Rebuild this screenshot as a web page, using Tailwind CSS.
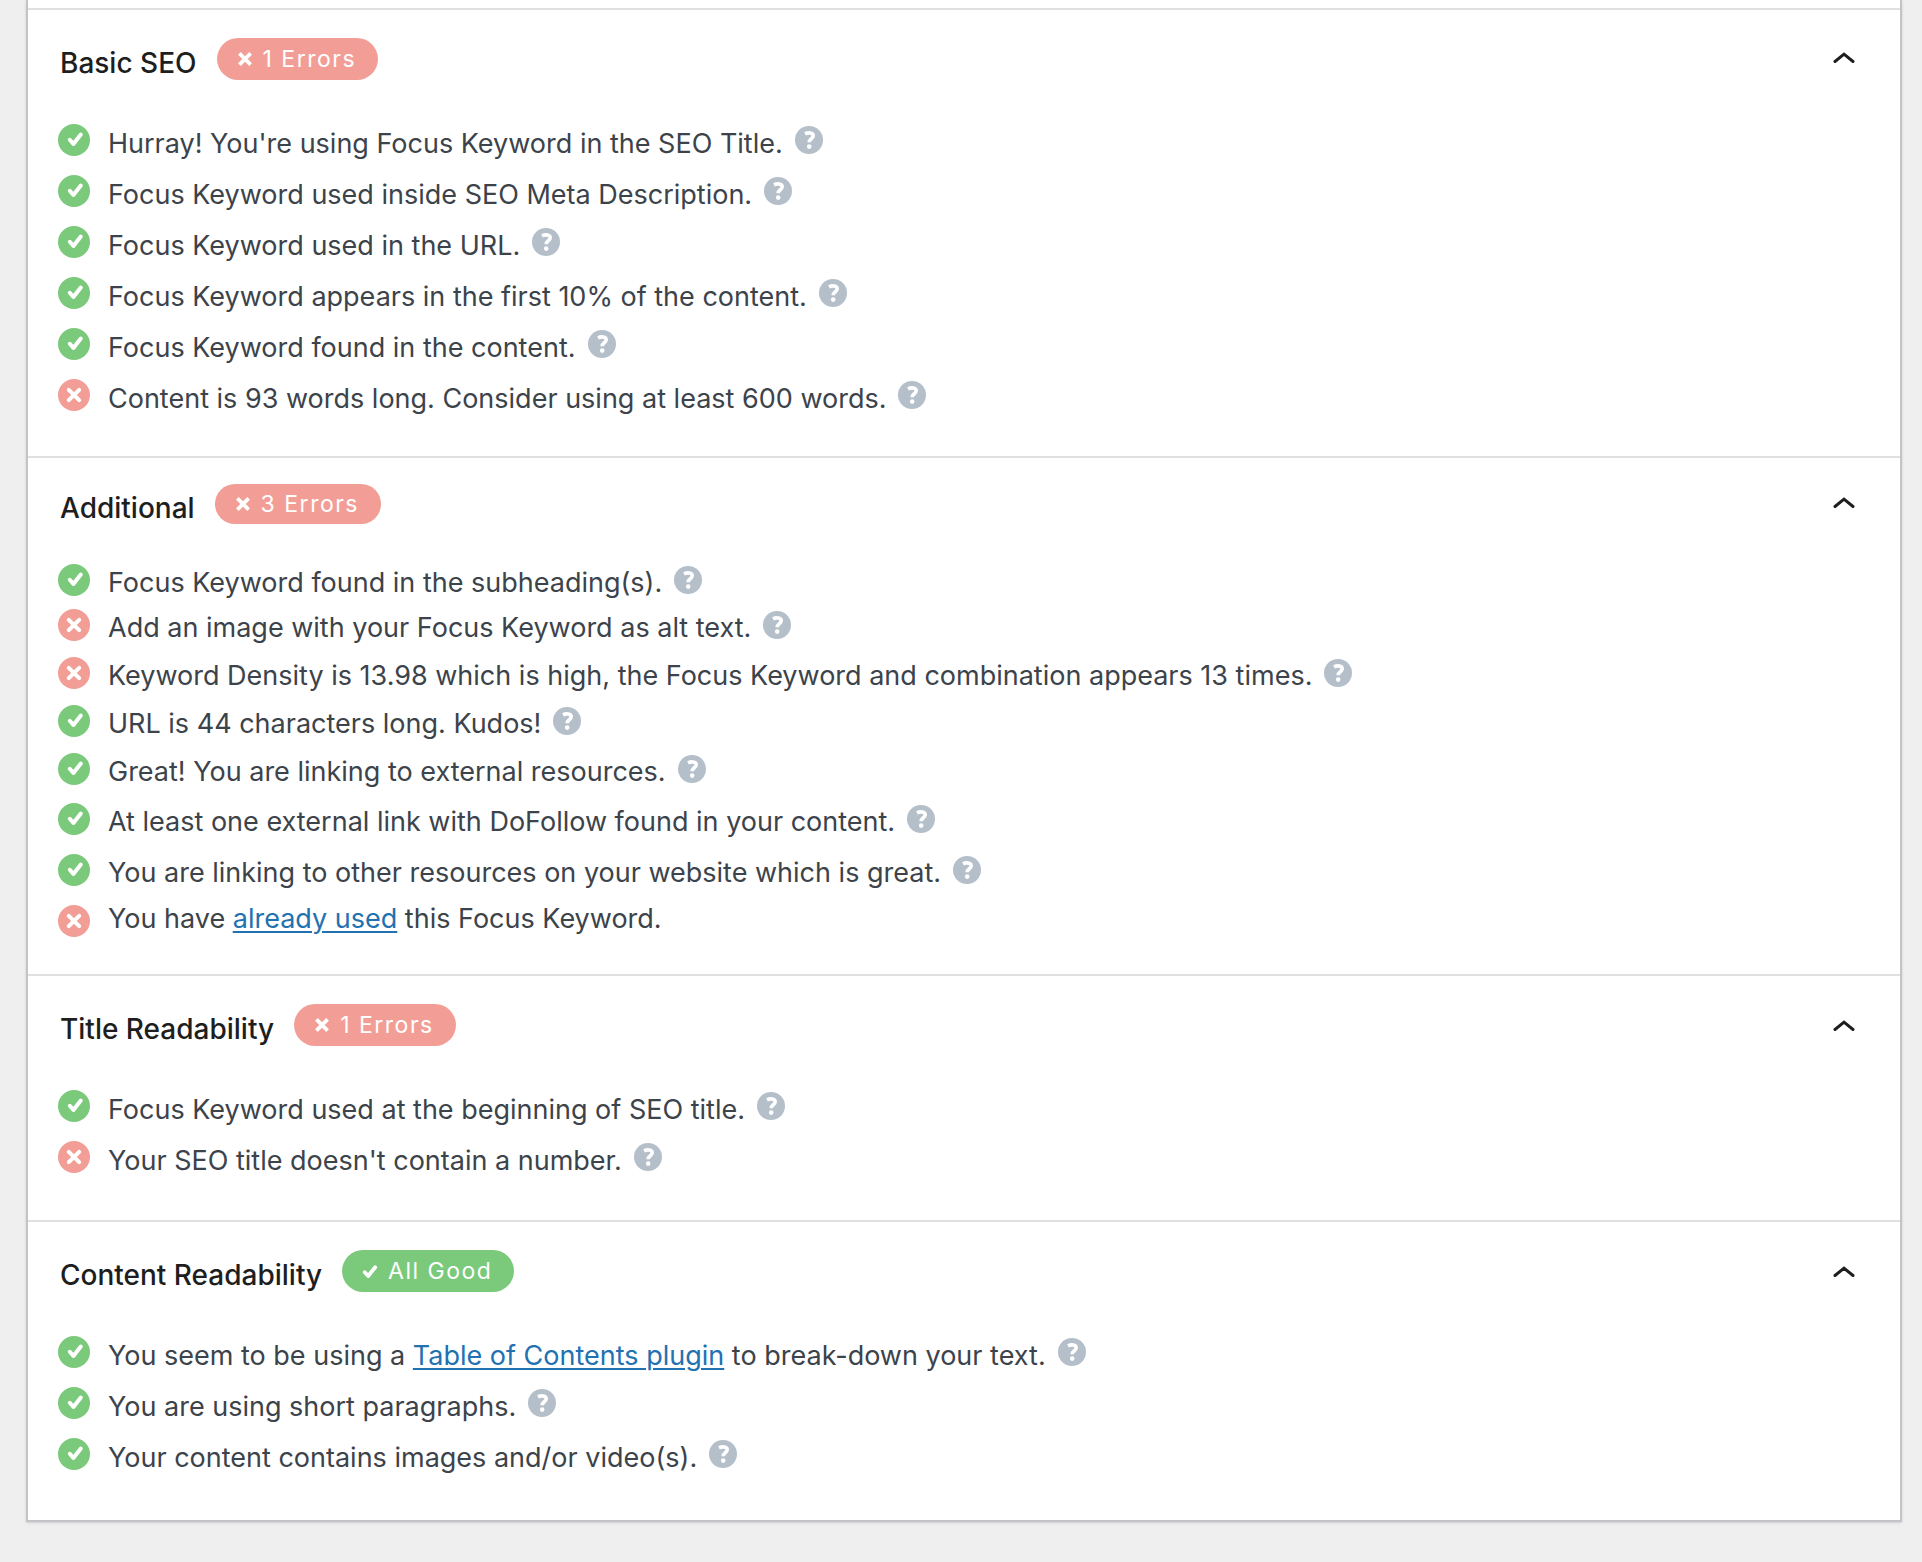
<!DOCTYPE html>
<html lang="en">
<head>
<meta charset="utf-8">
<meta name="viewport" content="width=device-width, initial-scale=1">
<title>SEO Analysis</title>
<script src="https://cdn.jsdelivr.net/npm/@tailwindcss/browser@4"></script>
</head>
<body class="min-h-screen bg-[#efefef] pr-5 pb-10 pl-[26px] font-['Inter',sans-serif] text-[27px] leading-8 text-[#3c434a]">
<svg class="hidden" aria-hidden="true">
  <symbol id="ok" viewBox="0 0 32 32"><circle cx="16" cy="16" r="16" fill="#7bc97a"/><path d="M11.8 15.8l3.6 4.2 7.4-9.4" fill="none" stroke="#fff" stroke-width="4" stroke-linejoin="round" stroke-linecap="round"/></symbol>
  <symbol id="bad" viewBox="0 0 32 32"><circle cx="16" cy="16" r="16" fill="#f29e96"/><path d="M10.8 10.8l10.4 10.4M21.2 10.8L10.8 21.2" fill="none" stroke="#fff" stroke-width="4" stroke-linecap="round"/></symbol>
  <symbol id="help" viewBox="0 0 28 28"><circle cx="14" cy="14" r="14" fill="#b4bfca"/><path d="M10 7.8c3-1.5 8.2-1.3 8.2 2 0 3-4 3-4 6.4" fill="none" stroke="#fff" stroke-width="3.6"/><circle cx="14.2" cy="20.6" r="2.3" fill="#fff"/></symbol>
  <symbol id="cross" viewBox="0 0 16 16"><path d="M2.4 2.4l11.2 11.2M13.6 2.4L2.4 13.6" fill="none" stroke="#fff" stroke-width="3.8"/></symbol>
  <symbol id="tick" viewBox="0 0 16 16"><path d="M2.8 9.2l3.4 3.8 7-8.8" fill="none" stroke="#fff" stroke-width="3.8" stroke-linejoin="round" stroke-linecap="round"/></symbol>
  <symbol id="up" viewBox="0 0 24 12"><path d="M3 10.5l9-7.3 9 7.3" fill="none" stroke="#1e1e1e" stroke-width="3" stroke-linecap="round"/></symbol>
</svg>
<main class="border-2 border-t-0 border-[#c3c4c7] bg-white shadow-sm">
  <div class="h-2"></div>

  <section class="border-t-2 border-[#e0e0e0] pt-7 pr-11 pb-9 pl-[30px]">
    <header class="flex h-[42px] items-center">
      <h2 class="pt-2 pl-0.5 text-[28px] font-medium text-[#1e1e1e]">Basic SEO</h2>
      <span class="ml-5 flex h-full items-center gap-2.5 rounded-full bg-[#f29e96] pr-[22px] pl-5 text-[23px] tracking-[1.5px] text-white"><svg class="size-4"><use href="#cross"/></svg>1 Errors</span>
      <button type="button" aria-label="Collapse Basic SEO" class="ml-auto pb-1"><svg class="h-3 w-6"><use href="#up"/></svg></button>
    </header>
    <ul class="mt-[34px]">
      <li class="flex h-[51px] items-center"><svg class="mr-[18px] size-8"><use href="#ok"/></svg><span class="pt-2">Hurray! You're using Focus Keyword in the SEO Title.</span><a href="#" aria-label="Help" class="ml-3"><svg class="size-7"><use href="#help"/></svg></a></li>
      <li class="flex h-[51px] items-center"><svg class="mr-[18px] size-8"><use href="#ok"/></svg><span class="pt-2">Focus Keyword used inside SEO Meta Description.</span><a href="#" aria-label="Help" class="ml-3"><svg class="size-7"><use href="#help"/></svg></a></li>
      <li class="flex h-[51px] items-center"><svg class="mr-[18px] size-8"><use href="#ok"/></svg><span class="pt-2">Focus Keyword used in the URL.</span><a href="#" aria-label="Help" class="ml-3"><svg class="size-7"><use href="#help"/></svg></a></li>
      <li class="flex h-[51px] items-center"><svg class="mr-[18px] size-8"><use href="#ok"/></svg><span class="pt-2">Focus Keyword appears in the first 10% of the content.</span><a href="#" aria-label="Help" class="ml-3"><svg class="size-7"><use href="#help"/></svg></a></li>
      <li class="flex h-[51px] items-center"><svg class="mr-[18px] size-8"><use href="#ok"/></svg><span class="pt-2">Focus Keyword found in the content.</span><a href="#" aria-label="Help" class="ml-3"><svg class="size-7"><use href="#help"/></svg></a></li>
      <li class="flex h-[51px] items-center"><svg class="mr-[18px] size-8"><use href="#bad"/></svg><span class="pt-2">Content is 93 words long. Consider using at least 600 words.</span><a href="#" aria-label="Help" class="ml-3"><svg class="size-7"><use href="#help"/></svg></a></li>
    </ul>
  </section>

  <section class="border-t-2 border-[#e0e0e0] pt-[26px] pr-11 pb-7 pl-[30px]">
    <header class="flex h-10 items-center">
      <h2 class="pt-2 pl-0.5 text-[28px] font-medium text-[#1e1e1e]">Additional</h2>
      <span class="ml-5 flex h-full items-center gap-2.5 rounded-full bg-[#f29e96] pr-[22px] pl-5 text-[23px] tracking-[1.5px] text-white"><svg class="size-4"><use href="#cross"/></svg>3 Errors</span>
      <button type="button" aria-label="Collapse Additional" class="ml-auto pb-1"><svg class="h-3 w-6"><use href="#up"/></svg></button>
    </header>
    <ul class="mt-[35px]">
      <li class="flex h-[42px] items-center"><svg class="mr-[18px] size-8"><use href="#ok"/></svg><span class="pt-1.5">Focus Keyword found in the subheading(s).</span><a href="#" aria-label="Help" class="ml-3"><svg class="size-7"><use href="#help"/></svg></a></li>
      <li class="flex h-12 items-center"><svg class="mr-[18px] size-8"><use href="#bad"/></svg><span class="pt-1.5">Add an image with your Focus Keyword as alt text.</span><a href="#" aria-label="Help" class="ml-3"><svg class="size-7"><use href="#help"/></svg></a></li>
      <li class="flex h-12 items-center"><svg class="mr-[18px] size-8"><use href="#bad"/></svg><span class="pt-1.5">Keyword Density is 13.98 which is high, the Focus Keyword and combination appears 13 times.</span><a href="#" aria-label="Help" class="ml-3"><svg class="size-7"><use href="#help"/></svg></a></li>
      <li class="flex h-12 items-center"><svg class="mr-[18px] size-8"><use href="#ok"/></svg><span class="pt-1.5">URL is 44 characters long. Kudos!</span><a href="#" aria-label="Help" class="ml-3"><svg class="size-7"><use href="#help"/></svg></a></li>
      <li class="flex h-12 items-center"><svg class="mr-[18px] size-8"><use href="#ok"/></svg><span class="pt-1.5">Great! You are linking to external resources.</span><a href="#" aria-label="Help" class="ml-3"><svg class="size-7"><use href="#help"/></svg></a></li>
      <li class="flex h-[51px] items-center"><svg class="mr-[18px] size-8"><use href="#ok"/></svg><span class="pt-1.5">At least one external link with DoFollow found in your content.</span><a href="#" aria-label="Help" class="ml-3"><svg class="size-7"><use href="#help"/></svg></a></li>
      <li class="flex h-[51px] items-center"><svg class="mr-[18px] size-8"><use href="#ok"/></svg><span class="pt-1.5">You are linking to other resources on your website which is great.</span><a href="#" aria-label="Help" class="ml-3"><svg class="size-7"><use href="#help"/></svg></a></li>
      <li class="flex h-[51px] items-center"><svg class="mr-[18px] size-8"><use href="#bad"/></svg><span class="pb-1">You have <a href="#" class="text-[#2271b1] underline decoration-2 underline-offset-3">already used</a> this Focus Keyword.</span></li>
    </ul>
  </section>

  <section class="border-t-2 border-[#e0e0e0] pt-7 pr-11 pb-[38px] pl-[30px]">
    <header class="flex h-[42px] items-center">
      <h2 class="pt-2 pl-0.5 text-[28px] font-medium text-[#1e1e1e]">Title Readability</h2>
      <span class="ml-5 flex h-full items-center gap-2.5 rounded-full bg-[#f29e96] pr-[22px] pl-5 text-[23px] tracking-[1.5px] text-white"><svg class="size-4"><use href="#cross"/></svg>1 Errors</span>
      <button type="button" aria-label="Collapse Title Readability" class="ml-auto"><svg class="h-3 w-6"><use href="#up"/></svg></button>
    </header>
    <ul class="mt-[34px]">
      <li class="flex h-[51px] items-center"><svg class="mr-[18px] size-8"><use href="#ok"/></svg><span class="pt-2">Focus Keyword used at the beginning of SEO title.</span><a href="#" aria-label="Help" class="ml-3"><svg class="size-7"><use href="#help"/></svg></a></li>
      <li class="flex h-[51px] items-center"><svg class="mr-[18px] size-8"><use href="#bad"/></svg><span class="pt-2">Your SEO title doesn't contain a number.</span><a href="#" aria-label="Help" class="ml-3"><svg class="size-7"><use href="#help"/></svg></a></li>
    </ul>
  </section>

  <section class="border-t-2 border-[#e0e0e0] pt-7 pr-11 pb-[41px] pl-[30px]">
    <header class="flex h-[42px] items-center">
      <h2 class="pt-2 pl-0.5 text-[28px] font-medium text-[#1e1e1e]">Content Readability</h2>
      <span class="ml-5 flex h-full items-center gap-2.5 rounded-full bg-[#7bc97a] pr-[22px] pl-5 text-[23px] tracking-[1.5px] text-white"><svg class="size-4"><use href="#tick"/></svg>All Good</span>
      <button type="button" aria-label="Collapse Content Readability" class="ml-auto"><svg class="h-3 w-6"><use href="#up"/></svg></button>
    </header>
    <ul class="mt-[34px]">
      <li class="flex h-[51px] items-center"><svg class="mr-[18px] size-8"><use href="#ok"/></svg><span class="pt-2">You seem to be using a <a href="#" class="text-[#2271b1] underline decoration-2 underline-offset-3">Table of Contents plugin</a> to break-down your text.</span><a href="#" aria-label="Help" class="ml-3"><svg class="size-7"><use href="#help"/></svg></a></li>
      <li class="flex h-[51px] items-center"><svg class="mr-[18px] size-8"><use href="#ok"/></svg><span class="pt-2">You are using short paragraphs.</span><a href="#" aria-label="Help" class="ml-3"><svg class="size-7"><use href="#help"/></svg></a></li>
      <li class="flex h-[51px] items-center"><svg class="mr-[18px] size-8"><use href="#ok"/></svg><span class="pt-2">Your content contains images and/or video(s).</span><a href="#" aria-label="Help" class="ml-3"><svg class="size-7"><use href="#help"/></svg></a></li>
    </ul>
  </section>
</main>
</body>
</html>
